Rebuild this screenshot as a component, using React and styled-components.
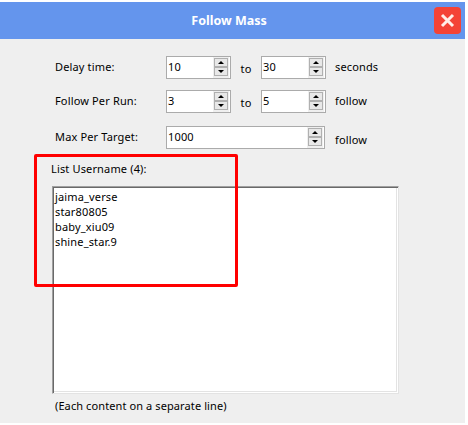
import styled, { createGlobalStyle } from "styled-components"

const GlobalStyle = createGlobalStyle`
html, body {
  margin: 0;
  padding: 0;
  background: #fff;
  font-family: "Noto Sans", "DejaVu Sans", sans-serif;
  font-size: 11px;
  letter-spacing: 0.15px;
  color: #000;
}
`

const SpinBox = ({ value, wide }) => (
  <Spin $wide={wide}>
    <SpinValue>{value}</SpinValue>
    <SpinButtons>
      <SpinButton><UpArrow /></SpinButton>
      <SpinButton><DownArrow /></SpinButton>
    </SpinButtons>
  </Spin>
)

export default function App() {
  return (
    <>
      <GlobalStyle />
      <Dialog>
        <TitleBar>
          <Title>Follow Mass</Title>
          <CloseButton>
            <svg width="15" height="15" viewBox="0 0 15 15">
              <path d="M2 2 L13 13 M13 2 L2 13" stroke="#ffeee8" strokeWidth="3" />
            </svg>
          </CloseButton>
        </TitleBar>
        <Body>
          <Form>
            <Row $top={0}>
              <Label>Delay time:</Label>
              <SpinBox value="10" />
              <To>to</To>
              <SpinBox value="30" />
              <Unit>seconds</Unit>
            </Row>
            <Row $top={11}>
              <Label>Follow Per Run:</Label>
              <SpinBox value="3" />
              <To>to</To>
              <SpinBox value="5" />
              <Unit>follow</Unit>
            </Row>
            <Row $top={13}>
              <Label>Max Per Target:</Label>
              <SpinBox value="1000" wide />
              <Unit $low>follow</Unit>
            </Row>
          </Form>
          <ListLabel>List Username (4):</ListLabel>
          <ListBox>
            <div>jaima_verse</div>
            <div>star80805</div>
            <div>baby_xiu09</div>
            <div>shine_star.9</div>
          </ListBox>
          <Hint>(Each content on a separate line)</Hint>
          <Highlight />
        </Body>
      </Dialog>
    </>
  )
}

const Dialog = styled.div`
width: 465px;
height: 421px;
margin-top: 2px;
background: #efefef;
display: flex;
flex-direction: column;
`

const TitleBar = styled.div`
height: 37px;
flex: none;
background: #6495ed;
display: flex;
align-items: center;
padding-right: 4px;
box-sizing: border-box;
`

const Title = styled.div`
flex: 1;
text-align: center;
padding-left: 24px;
color: #fff;
font-weight: 700;
font-size: 12.5px;
letter-spacing: 0;
`

const CloseButton = styled.div`
width: 27px;
height: 27px;
background: #f44336;
border-radius: 4px;
display: flex;
align-items: center;
justify-content: center;
`

const Body = styled.div`
position: relative;
flex: 1;
padding: 17px 0 0 51px;
`

const Form = styled.div`
display: flex;
flex-direction: column;
padding-left: 4px;
`

const Row = styled.div`
display: grid;
grid-template-columns: 111px 65px 30px 65px auto;
align-items: center;
height: 23px;
margin-top: ${(p) => p.$top}px;
`

const Label = styled.div`
padding-bottom: 3px;
`

const To = styled.div`
text-align: center;
padding-top: 1px;
`

const Unit = styled.div`
grid-column: 5;
margin-left: 9px;
padding-top: ${(p) => (p.$low ? 3 : 0)}px;
padding-bottom: ${(p) => (p.$low ? 0 : 2)}px;
`

const Spin = styled.div`
grid-column: ${(p) => (p.$wide ? "span 3" : "auto")};
width: ${(p) => (p.$wide ? 159 : 65)}px;
height: 23px;
box-sizing: border-box;
border: 1px solid #ababab;
background: #fff;
display: flex;
align-items: center;
justify-content: space-between;
padding-left: 1px;
padding-right: 1px;
`

const SpinValue = styled.div`
line-height: 17px;
padding-bottom: 3px;
`

const SpinButtons = styled.div`
display: flex;
flex-direction: column;
background: #efefef;
padding: 1px 1px 2px;
`

const SpinButton = styled.div`
width: 12px;
height: 7px;
border: 1px solid #b0b0b0;
background: #e8e8e8;
display: flex;
align-items: center;
justify-content: center;
`

const UpArrow = styled.div`
width: 0;
height: 0;
border-left: 3px solid transparent;
border-right: 3px solid transparent;
border-bottom: 3px solid #000;
`

const DownArrow = styled.div`
width: 0;
height: 0;
border-left: 3px solid transparent;
border-right: 3px solid transparent;
border-top: 3px solid #000;
`

const ListLabel = styled.div`
margin-top: 11px;
line-height: 17px;
`

const ListBox = styled.div`
width: 347px;
height: 208px;
box-sizing: border-box;
margin: 9px 0 0 1px;
background: #fff;
border-style: solid;
border-width: 1px;
border-color: #a0a0a0 #e3e3e3 #e3e3e3 #a0a0a0;
box-shadow: inset 1px 1px 0 #696969, inset -1px -1px 0 #fff, inset -2px -2px 0 #e3e3e3;
padding: 2px 0 0 2px;
line-height: 15px;
`

const Hint = styled.div`
margin: 3px 0 0 4px;
line-height: 17px;
letter-spacing: 0.1px;
`

const Highlight = styled.div`
position: absolute;
left: 34px;
top: 115px;
width: 204px;
height: 133px;
box-sizing: border-box;
border: 3px solid #f00;
border-radius: 2px;
`
